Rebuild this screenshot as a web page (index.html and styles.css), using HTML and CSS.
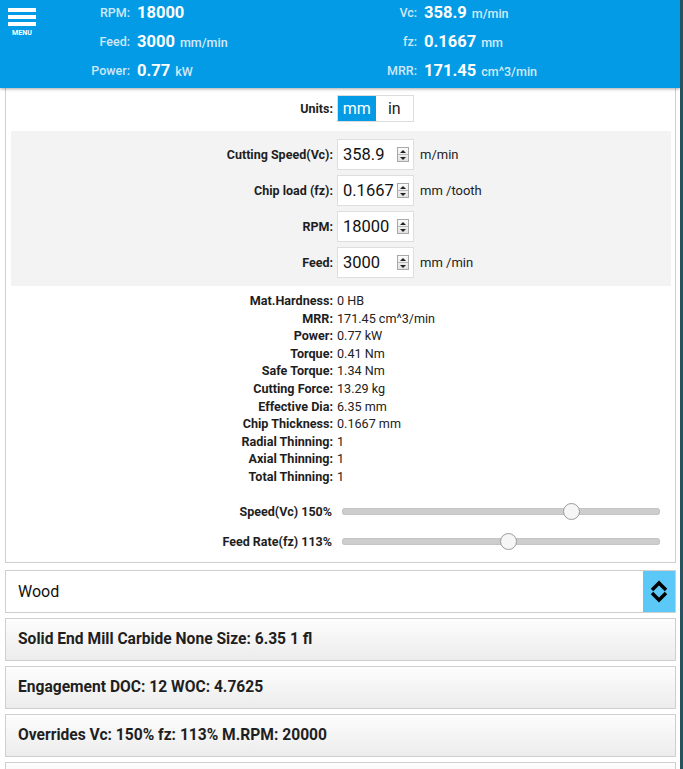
FILE: index.html
```html
<!DOCTYPE html>
<html lang="en">
<head>
<meta charset="utf-8">
<title>Speeds and Feeds</title>
<link rel="stylesheet" href="styles.css">
</head>
<body>
<div class="page">
  <header class="topbar">
    <div class="menu">
      <span class="bar"></span>
      <span class="bar"></span>
      <span class="bar"></span>
      <span class="menu-label">MENU</span>
    </div>
    <div class="stats">
      <span class="k">RPM:</span><span class="v">18000</span>
      <span class="k">Vc:</span><span class="v">358.9 <small>m/min</small></span>
      <span class="k">Feed:</span><span class="v">3000 <small>mm/min</small></span>
      <span class="k">fz:</span><span class="v">0.1667 <small>mm</small></span>
      <span class="k">Power:</span><span class="v">0.77 <small>kW</small></span>
      <span class="k">MRR:</span><span class="v">171.45 <small>cm^3/min</small></span>
    </div>
  </header>

  <main class="card">
    <div class="units-row">
      <span class="lbl">Units:</span>
      <div class="toggle"><span class="opt on">mm</span><span class="opt">in</span></div>
    </div>

    <div class="panel">
      <div class="field">
        <span class="lbl">Cutting Speed(Vc):</span>
        <div class="num"><span class="val">358.9</span><span class="spin"><span class="up"></span><span class="dn"></span></span></div>
        <span class="unit">m/min</span>
      </div>
      <div class="field">
        <span class="lbl">Chip load (fz):</span>
        <div class="num"><span class="val">0.1667</span><span class="spin"><span class="up"></span><span class="dn"></span></span></div>
        <span class="unit">mm /tooth</span>
      </div>
      <div class="field">
        <span class="lbl">RPM:</span>
        <div class="num"><span class="val">18000</span><span class="spin"><span class="up"></span><span class="dn"></span></span></div>
        <span class="unit"></span>
      </div>
      <div class="field">
        <span class="lbl">Feed:</span>
        <div class="num"><span class="val">3000</span><span class="spin"><span class="up"></span><span class="dn"></span></span></div>
        <span class="unit">mm /min</span>
      </div>
    </div>

    <dl class="info">
      <dt>Mat.Hardness:</dt><dd>0 HB</dd>
      <dt>MRR:</dt><dd>171.45 cm^3/min</dd>
      <dt>Power:</dt><dd>0.77 kW</dd>
      <dt>Torque:</dt><dd>0.41 Nm</dd>
      <dt>Safe Torque:</dt><dd>1.34 Nm</dd>
      <dt>Cutting Force:</dt><dd>13.29 kg</dd>
      <dt>Effective Dia:</dt><dd>6.35 mm</dd>
      <dt>Chip Thickness:</dt><dd>0.1667 mm</dd>
      <dt>Radial Thinning:</dt><dd>1</dd>
      <dt>Axial Thinning:</dt><dd>1</dd>
      <dt>Total Thinning:</dt><dd>1</dd>
    </dl>

    <div class="slider-row">
      <span class="lbl">Speed(Vc) 150%</span>
      <input class="range" type="range" min="20" max="197" step="any" value="150">
    </div>
    <div class="slider-row">
      <span class="lbl">Feed Rate(fz) 113%</span>
      <input class="range" type="range" min="20" max="197" step="any" value="113">
    </div>
  </main>

  <div class="select">
    <span class="sel-text">Wood</span>
    <span class="sel-arrow">
      <svg width="20" height="26" viewBox="0 0 20 26"><polyline points="3,12 10,5 17,12" fill="none" stroke="#000" stroke-width="3.4"/><polyline points="3,15 10,22 17,15" fill="none" stroke="#000" stroke-width="3.4"/></svg>
    </span>
  </div>
  <div class="acc">Solid End Mill Carbide None Size: 6.35 1 fl</div>
  <div class="acc">Engagement DOC: 12 WOC: 4.7625</div>
  <div class="acc">Overrides Vc: 150% fz: 113% M.RPM: 20000</div>
  <div class="acc acc-next"></div>
</div>
</body>
</html>
```

FILE: styles.css
```css
html, body {
  margin: 0;
  padding: 0;
}
body {
  background: #27525f;
  font-family: Roboto, "Liberation Sans", Arial, sans-serif;
  color: #222;
}
.page {
  width: 680px;
  height: 769px;
  background: #fff;
  overflow: hidden;
}

/* ---------- top bar ---------- */
.topbar {
  display: flex;
  height: 88px;
  background: #039be5;
  box-shadow: 0 1px 3px rgba(0, 0, 0, 0.35);
  position: relative;
  z-index: 1;
}
.menu {
  width: 44px;
  box-sizing: border-box;
  padding: 8px 0 0 8px;
  display: flex;
  flex-direction: column;
  align-items: flex-start;
}
.bar {
  display: block;
  width: 28px;
  height: 4px;
  background: #fff;
  margin-bottom: 3px;
}
.menu-label {
  width: 28px;
  text-align: center;
  color: #fff;
  font-size: 7px;
  font-weight: 700;
  line-height: 8px;
  letter-spacing: 0.1px;
}
.stats {
  display: grid;
  grid-template-columns: 86px 180px 93px auto;
  column-gap: 7px;
  grid-auto-rows: 20px;
  row-gap: 9px;
  padding-top: 2px;
  align-items: center;
}
.stats .k {
  justify-self: end;
  color: #cfe7f8;
  font-size: 12.5px;
  font-weight: 500;
}
.stats .v {
  color: #fff;
  font-size: 16.5px;
  font-weight: 700;
  white-space: nowrap;
}
.stats .v small {
  color: #d3eaf9;
  font-size: 12.5px;
  font-weight: 500;
  margin-left: 1px;
}

/* ---------- main card ---------- */
.card {
  margin: 0 4px 0 5px;
  border: 1px solid #cfcfcf;
  border-top: none;
  padding: 7px 0 5px 0;
}
.lbl {
  font-weight: 700;
  font-size: 12.5px;
  text-align: right;
  color: #1e1e1e;
}
.units-row {
  display: grid;
  grid-template-columns: 327px 77px;
  column-gap: 4px;
  align-items: center;
}
.toggle {
  display: flex;
  height: 27px;
  box-sizing: border-box;
  border: 1px solid #dcdcdc;
  background: #fff;
}
.opt {
  flex: 1;
  display: flex;
  align-items: center;
  justify-content: center;
  font-size: 16px;
  color: #222;
}
.opt.on {
  background: #039be5;
  color: #fff;
}

.panel {
  margin: 9px 4px 0 5px;
  background: #f3f3f3;
  padding: 8px 0;
  display: flex;
  flex-direction: column;
  gap: 5px;
}
.field {
  display: grid;
  grid-template-columns: 322px 77px auto;
  column-gap: 4px;
  align-items: center;
  height: 31px;
}
.num {
  height: 31px;
  box-sizing: border-box;
  border: 1px solid #dedede;
  background: #fff;
  display: flex;
  align-items: center;
  padding: 0 3px 0 5px;
}
.val {
  flex: 1;
  font-size: 16.5px;
  color: #111;
}
.spin {
  width: 12px;
  height: 15px;
  box-sizing: border-box;
  border: 1px solid #a8a8a8;
  background: linear-gradient(#fbfbfb, #e2e2e2);
  display: flex;
  flex-direction: column;
  margin-right: 1px;
}
.spin .up, .spin .dn {
  flex: 1;
  display: flex;
  align-items: center;
  justify-content: center;
}
.spin .up {
  border-bottom: 1px solid #b8b8b8;
}
.spin .up::before {
  content: "";
  border-left: 3px solid transparent;
  border-right: 3px solid transparent;
  border-bottom: 3px solid #222;
}
.spin .dn::before {
  content: "";
  border-left: 3px solid transparent;
  border-right: 3px solid transparent;
  border-top: 3px solid #222;
}
.unit {
  font-size: 13px;
  color: #222;
  padding-left: 2px;
}

.info {
  margin: 6px 0 0 0;
  display: grid;
  grid-template-columns: 327px auto;
  column-gap: 4px;
  line-height: 17.6px;
  font-size: 12.6px;
}
.info dt {
  font-weight: 700;
  text-align: right;
  color: #1e1e1e;
}
.info dd {
  margin: 0;
  color: #222;
}

.slider-row {
  display: grid;
  grid-template-columns: 326px 318px;
  column-gap: 10px;
  align-items: center;
  height: 30px;
}
.info + .slider-row {
  margin-top: 11px;
}
.range {
  -webkit-appearance: none;
  appearance: none;
  width: 318px;
  height: 7px;
  margin: 0;
  border-radius: 4px;
  background: #cdcdcd;
  box-shadow: inset 0 0 0 1px #c4c4c4;
  outline: none;
}
.range::-webkit-slider-thumb {
  -webkit-appearance: none;
  width: 17px;
  height: 17px;
  border-radius: 50%;
  background: #f6f6f6;
  border: 1px solid #9b9b9b;
  box-sizing: border-box;
}

/* ---------- select & collapsible headers ---------- */
.select {
  margin: 7px 4px 0 5px;
  height: 43px;
  box-sizing: border-box;
  border: 1px solid #cfcfcf;
  display: flex;
  align-items: center;
  padding-left: 12px;
  background: #fff;
}
.sel-text {
  flex: 1;
  font-size: 16px;
  color: #111;
}
.sel-arrow {
  align-self: stretch;
  width: 32px;
  background: #5bc8f8;
  display: flex;
  align-items: center;
  justify-content: center;
}
.sel-arrow svg {
  display: block;
}
.acc {
  margin: 5px 4px 0 5px;
  height: 43px;
  box-sizing: border-box;
  border: 1px solid #cfcfcf;
  background: linear-gradient(#fdfdfd, #ececec);
  display: flex;
  align-items: center;
  padding-left: 12px;
  font-size: 15.6px;
  font-weight: 700;
  color: #1f1f1f;
}
```
